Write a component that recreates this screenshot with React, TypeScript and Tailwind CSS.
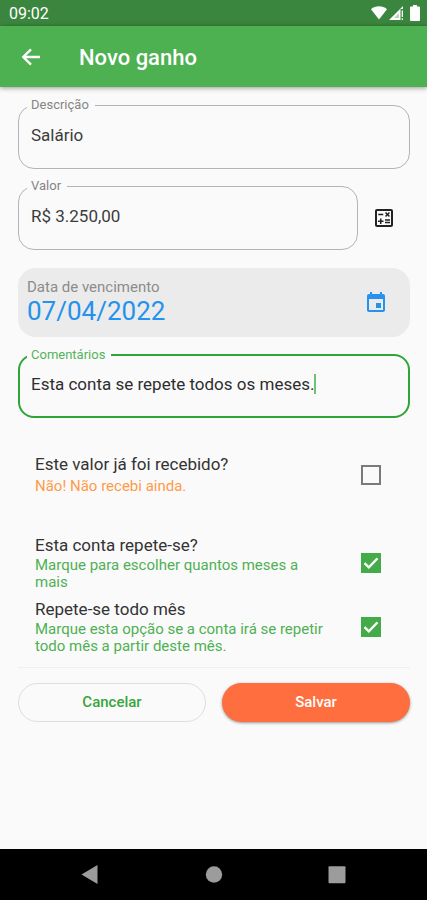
import { useState, type ReactNode } from "react";

function OutlinedField({
  id,
  label,
  focused = false,
  children,
}: {
  id: string;
  label: string;
  focused?: boolean;
  children: ReactNode;
}) {
  return (
    <fieldset
      className={`min-w-0 flex-1 rounded-2xl ${
        focused ? "border-2 border-[#2fa538] px-[11px]" : "border border-[#b4b4b4] px-3"
      }`}
    >
      <legend className={`-ml-1 pr-1.5 pl-1 text-[13px] leading-4 ${focused ? "text-[#55b35b]" : "text-[#858585]"}`}>
        <label htmlFor={id}>{label}</label>
      </legend>
      <div className={`flex items-center pb-3 ${focused ? "h-[53px]" : "h-[55px]"}`}>{children}</div>
    </fieldset>
  );
}

function CheckRow({
  id,
  title,
  note,
  noteClass,
  initial,
}: {
  id: string;
  title: string;
  note: string;
  noteClass: string;
  initial: boolean;
}) {
  const [checked, setChecked] = useState(initial);
  return (
    <div className="flex items-center justify-between gap-8">
      <label htmlFor={id} className="flex min-w-0 flex-col">
        <span className="text-[17px] leading-5 text-[#333333]">{title}</span>
        <span className={noteClass}>{note}</span>
      </label>
      <span className="grid shrink-0">
        <input
          id={id}
          type="checkbox"
          checked={checked}
          onChange={() => setChecked(!checked)}
          className="col-start-1 row-start-1 size-5 appearance-none border-2 border-[#7a7a7a] checked:border-[#43ab47] checked:bg-[#43ab47]"
        />
        {checked && (
          <svg viewBox="0 0 20 20" className="pointer-events-none col-start-1 row-start-1 size-5" aria-hidden="true">
            <path d="M3.5 10.2 7.8 14.3 16.5 5.4" fill="none" stroke="#fff" strokeWidth="2.3" />
          </svg>
        )}
      </span>
    </div>
  );
}

export default function App() {
  const [description, setDescription] = useState("Salário");
  const [amount, setAmount] = useState("R$ 3.250,00");
  const [comments, setComments] = useState("Esta conta se repete todos os meses.");

  return (
    <div className="flex min-h-screen flex-col bg-[#fafafa] font-['Roboto',sans-serif]">
      <div className="flex h-[26px] items-center justify-between bg-[#3b863e] pr-[7px] pl-[9px] text-white">
        <span className="pt-0.5 text-base leading-5">09:02</span>
        <div className="flex items-center gap-0.5 text-white">
          <svg viewBox="0 0 16 14" className="h-3.5 w-4" aria-hidden="true">
            <path d="M0 3.2C4.6-.6 11.4-.6 16 3.2L8 13.4z" fill="currentColor" />
          </svg>
          <svg viewBox="0 0 15 14" className="h-3.5 w-[15px]" aria-hidden="true">
            <path d="M0 14 14 0v3h-2.5v11z" fill="currentColor" />
            <path d="M5 12 10 7v5z" fill="#b9d5ba" />
            <path d="M12.7 4.5H14V11h-1.3zM12.7 12.3H14V14h-1.3z" fill="currentColor" />
          </svg>
          <svg viewBox="0 0 10 16" className="ml-1 h-4 w-2.5" aria-hidden="true">
            <path d="M3 0h4v1.6h2q1 0 1 1V15q0 1-1 1H1q-1 0-1-1V2.6q0-1 1-1h2z" fill="currentColor" />
          </svg>
        </div>
      </div>

      <header className="flex h-[61px] items-center gap-9 bg-[#4db051] px-[19px] text-white shadow-[0_1px_5px_rgba(0,0,0,0.4)]">
        <button type="button" aria-label="Voltar">
          <svg viewBox="0 0 24 24" className="size-6" fill="none" stroke="currentColor" strokeWidth="2.4" aria-hidden="true">
            <path d="M21 12H4.800M12 4.300 4.300 12l7.700 7.700" />
          </svg>
        </button>
        <h1 className="pt-0.5 text-[22px] leading-7 font-medium">Novo ganho</h1>
      </header>

      <form className="flex flex-col pt-2.5 pr-[17px] pl-[18px]" onSubmit={(e) => e.preventDefault()}>
        <div className="flex">
          <OutlinedField id="descricao" label="Descrição">
            <input
              id="descricao"
              value={description}
              onChange={(e) => setDescription(e.target.value)}
              className="w-full bg-transparent text-[17px] leading-6 text-[#3c3c3c] outline-none"
            />
          </OutlinedField>
        </div>

        <div className="mt-[9px] flex items-center">
          <OutlinedField id="valor" label="Valor">
            <input
              id="valor"
              value={amount}
              onChange={(e) => setAmount(e.target.value)}
              className="w-full bg-transparent text-[17px] leading-6 text-[#3c3c3c] outline-none"
            />
          </OutlinedField>
          <button type="button" aria-label="Calculadora" className="mt-2 mr-3.5 ml-3.5 text-[#222222]">
            <svg viewBox="0 0 24 24" className="size-6" fill="currentColor" aria-hidden="true">
              <path d="M19 3H5c-1.100 0-2 .9-2 2v14c0 1.100.9 2 2 2h14c1.100 0 2-.9 2-2V5c0-1.100-.9-2-2-2zm0 16H5V5h14v14z" />
              <path d="M6.250 7.720h5v1.500h-5zM13 15.750h5v1.500h-5zM13 13.250h5v1.500h-5zM8 18h1.500v-2h2v-1.500h-2v-2H8v2H6V16h2zM14.090 10.950l1.410-1.410 1.410 1.410 1.060-1.060-1.410-1.420 1.410-1.410L16.910 6 15.500 7.410 14.090 6l-1.060 1.060 1.410 1.410-1.410 1.420z" />
            </svg>
          </button>
        </div>

        <div className="mt-[18px] flex h-[69px] items-center justify-between rounded-[18px] bg-[#ebebeb] pr-[22px] pl-[9px]">
          <div className="flex min-w-0 flex-col">
            <label htmlFor="vencimento" className="text-[15px] leading-4 text-[#8c8c8c]">
              Data de vencimento
            </label>
            <input
              id="vencimento"
              readOnly
              value="07/04/2022"
              className="w-44 bg-transparent text-[26px] leading-8 text-[#2492ee] outline-none"
            />
          </div>
          <button type="button" aria-label="Escolher data" className="text-[#2492ee]">
            <svg viewBox="0 0 24 24" className="size-6" fill="currentColor" aria-hidden="true">
              <path d="M19 3h-1V1h-2v2H8V1H6v2H5c-1.110 0-1.990.9-1.990 2L3 19c0 1.100.89 2 2 2h14c1.100 0 2-.9 2-2V5c0-1.100-.9-2-2-2zm0 16H5V8h14v11zM12 12h5v5h-5z" />
            </svg>
          </button>
        </div>

        <div className="mt-2.5 flex">
          <OutlinedField id="comentarios" label="Comentários" focused>
            <input
              id="comentarios"
              value={comments}
              onChange={(e) => setComments(e.target.value)}
              className="field-sizing-content max-w-full bg-transparent text-[17px] leading-6 text-[#2e2e2e] outline-none"
            />
            <span className="h-5 w-0.5 shrink-0 bg-[#72c076]" />
          </OutlinedField>
        </div>

        <div className="mt-9 flex flex-col pr-[29px] pl-[17px]">
          <CheckRow
            id="recebido"
            title="Este valor já foi recebido?"
            note="Não! Não recebi ainda."
            noteClass="mt-1 text-[15px] leading-[17px] text-[#ff9a4a]"
            initial={false}
          />
          <div className="mt-10 flex flex-col gap-2">
            <CheckRow
              id="repete"
              title="Esta conta repete-se?"
              note="Marque para escolher quantos meses a mais"
              noteClass="mt-0.5 text-[15px] leading-[17px] text-[#4fb054]"
              initial
            />
            <CheckRow
              id="todo-mes"
              title="Repete-se todo mês"
              note="Marque esta opção se a conta irá se repetir todo mês a partir deste mês."
              noteClass="mt-0.5 text-[15px] leading-[17px] text-[#4fb054]"
              initial
            />
          </div>
        </div>

        <hr className="mt-3 border-[#efefef]" />

        <div className="mt-[15px] grid grid-cols-2 gap-4 text-[15px] font-medium">
          <button type="button" className="h-[39px] rounded-full border border-[#dedede] text-[#38a53d]">
            Cancelar
          </button>
          <button
            type="submit"
            className="h-[39px] rounded-full bg-[#ff6e3e] text-white shadow-[0_1px_3px_rgba(0,0,0,0.4)]"
          >
            Salvar
          </button>
        </div>
      </form>

      <nav className="mt-auto flex h-[51px] items-center justify-between bg-black px-20 text-[#9c9c9c]">
        <button type="button" aria-label="Voltar à tela anterior">
          <svg viewBox="0 0 20 20" className="size-5" fill="currentColor" aria-hidden="true">
            <path d="M1.500 9.500 17.500 0v19z" />
          </svg>
        </button>
        <button type="button" aria-label="Início">
          <svg viewBox="0 0 20 20" className="size-5" fill="currentColor" aria-hidden="true">
            <circle cx="10" cy="9.500" r="8.200" />
          </svg>
        </button>
        <button type="button" aria-label="Aplicativos recentes">
          <svg viewBox="0 0 20 20" className="size-5" fill="currentColor" aria-hidden="true">
            <rect x="1.500" y="1.200" width="17" height="17" rx="1" />
          </svg>
        </button>
      </nav>
    </div>
  );
}
